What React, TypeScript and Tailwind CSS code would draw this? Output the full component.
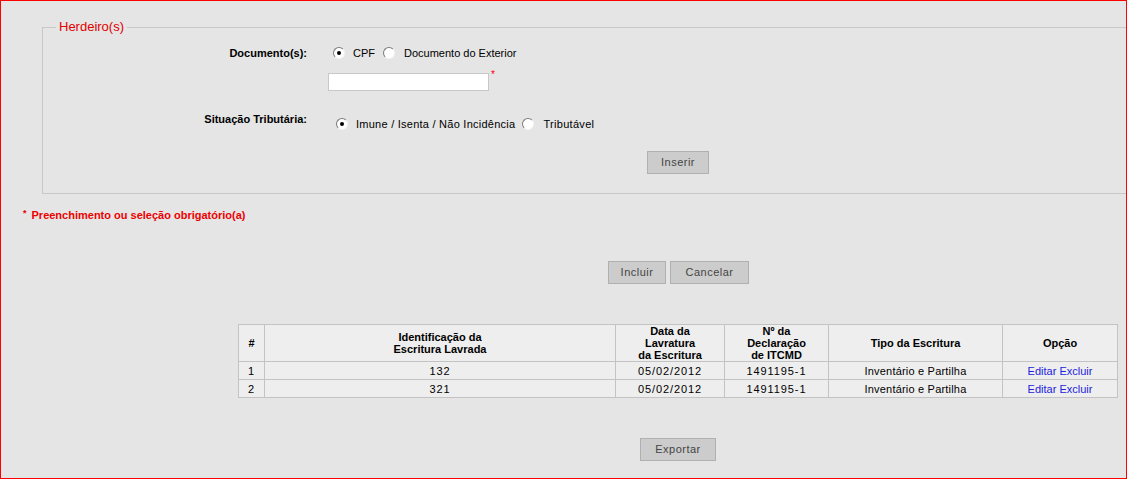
import React from 'react';

const Radio: React.FC<{ checked?: boolean; className?: string }> = ({ checked, className = '' }) => (
  <span
    className={`relative inline-block w-[12px] h-[12px] rounded-full border border-t-[#7a7a7a] border-l-[#7a7a7a] border-b-[#f4f4f4] border-r-[#f4f4f4] bg-white shrink-0 ${className}`}
  >
    {checked && <span className="absolute left-[3px] top-[3px] w-[4px] h-[4px] rounded-full bg-black" />}
  </span>
);

const Button: React.FC<{ label: string; className?: string }> = ({ label, className = '' }) => (
  <button
    type="button"
    className={`h-[23px] border border-[#b0b0b0] bg-[#cccccc] font-['Liberation_Sans',Arial,sans-serif] text-[11px] font-normal text-[#444444] tracking-[0.5px] ${className}`}
  >
    {label}
  </button>
);

const rows = [
  { n: '1', id: '132', data: '05/02/2012', decl: '1491195-1', tipo: 'Inventário e Partilha' },
  { n: '2', id: '321', data: '05/02/2012', decl: '1491195-1', tipo: 'Inventário e Partilha' },
];

const App: React.FC = () => {
  return (
    <div className="w-[1127px] h-[479px] overflow-hidden border border-[#ff0000] bg-[#e5e5e5] font-['Liberation_Sans',Arial,sans-serif] text-[11px] text-black">
      <fieldset className="ml-[41px] mt-[18px] w-[1100px] h-[175px] border border-[#c8c8c8] p-0 min-w-0">
        <legend className="ml-[13px] px-[3px] text-[13px] leading-[16px] text-[#e00000]">Herdeiro(s)</legend>

        <div className="mt-[10px] h-[16px] flex items-center">
          <div className="w-[264px] text-right font-bold">Documento(s):</div>
          <Radio checked className="ml-[26px]" />
          <span className="ml-[8px]">CPF</span>
          <Radio className="ml-[8px]" />
          <span className="ml-[9px]">Documento do Exterior</span>
        </div>

        <div className="mt-[12px] flex items-start">
          <input type="text" className="ml-[285px] w-[161px] h-[18px] border border-[#c8c8c8] bg-white" />
          <span className="ml-[2px] -mt-[3px] text-[10px] leading-[10px] text-[#ff0000]">*</span>
        </div>

        <div className="mt-[21px] flex items-start">
          <div className="w-[264px] h-[14px] leading-[14px] text-right font-bold">Situação Tributária:</div>
          <div className="mt-[5px] h-[14px] flex items-center">
            <Radio checked className="ml-[29px]" />
            <span className="ml-[8px] tracking-[0.25px]">Imune / Isenta / Não Incidência</span>
            <Radio className="ml-[7px]" />
            <span className="ml-[9px] tracking-[0.3px]">Tributável</span>
          </div>
        </div>

        <div className="mt-[20px] flex">
          <Button label="Inserir" className="ml-[604px] w-[62px]" />
        </div>
      </fieldset>

      <div className="mt-[14px] ml-[22px] h-[14px] flex items-center font-bold text-[#ee0000]">
        <span className="text-[9px] leading-[9px] -mt-[4px]">*</span>
        <span className="ml-[5px]">Preenchimento ou seleção obrigatório(a)</span>
      </div>

      <div className="mt-[39px] ml-[607px] flex gap-[4px]">
        <Button label="Incluir" className="w-[58px]" />
        <Button label="Cancelar" className="w-[79px]" />
      </div>

      <table className="mt-[40px] ml-[237px] w-[879px] table-fixed border-collapse border border-[#c3c3c3] bg-[#eeeeee]">
        <colgroup>
          <col className="w-[26px]" />
          <col className="w-[351px]" />
          <col className="w-[109px]" />
          <col className="w-[104px]" />
          <col className="w-[174px]" />
          <col className="w-[115px]" />
        </colgroup>
        <thead>
          <tr className="h-[37px] font-bold text-center leading-[12px]">
            <th className="border border-[#c3c3c3]">#</th>
            <th className="border border-[#c3c3c3]">
              Identificação da
              <br />
              Escritura Lavrada
            </th>
            <th className="border border-[#c3c3c3]">
              Data da
              <br />
              Lavratura
              <br />
              da Escritura
            </th>
            <th className="border border-[#c3c3c3]">
              Nº da
              <br />
              Declaração
              <br />
              de ITCMD
            </th>
            <th className="border border-[#c3c3c3]">Tipo da Escritura</th>
            <th className="border border-[#c3c3c3]">Opção</th>
          </tr>
        </thead>
        <tbody>
          {rows.map((r) => (
            <tr key={r.n} className="h-[18px] text-center leading-[14px]">
              <td className="border border-[#c3c3c3] tracking-[0.8px]">{r.n}</td>
              <td className="border border-[#c3c3c3] tracking-[0.8px]">{r.id}</td>
              <td className="border border-[#c3c3c3] tracking-[0.9px]">{r.data}</td>
              <td className="border border-[#c3c3c3] tracking-[0.9px]">{r.decl}</td>
              <td className="border border-[#c3c3c3] tracking-[0.2px]">{r.tipo}</td>
              <td className="border border-[#c3c3c3] text-[#2222dd]">
                <a href="#">Editar</a> <a href="#">Excluir</a>
              </td>
            </tr>
          ))}
        </tbody>
      </table>

      <div className="mt-[40px] ml-[639px] flex">
        <Button label="Exportar" className="w-[76px]" />
      </div>
    </div>
  );
};

export default App;
